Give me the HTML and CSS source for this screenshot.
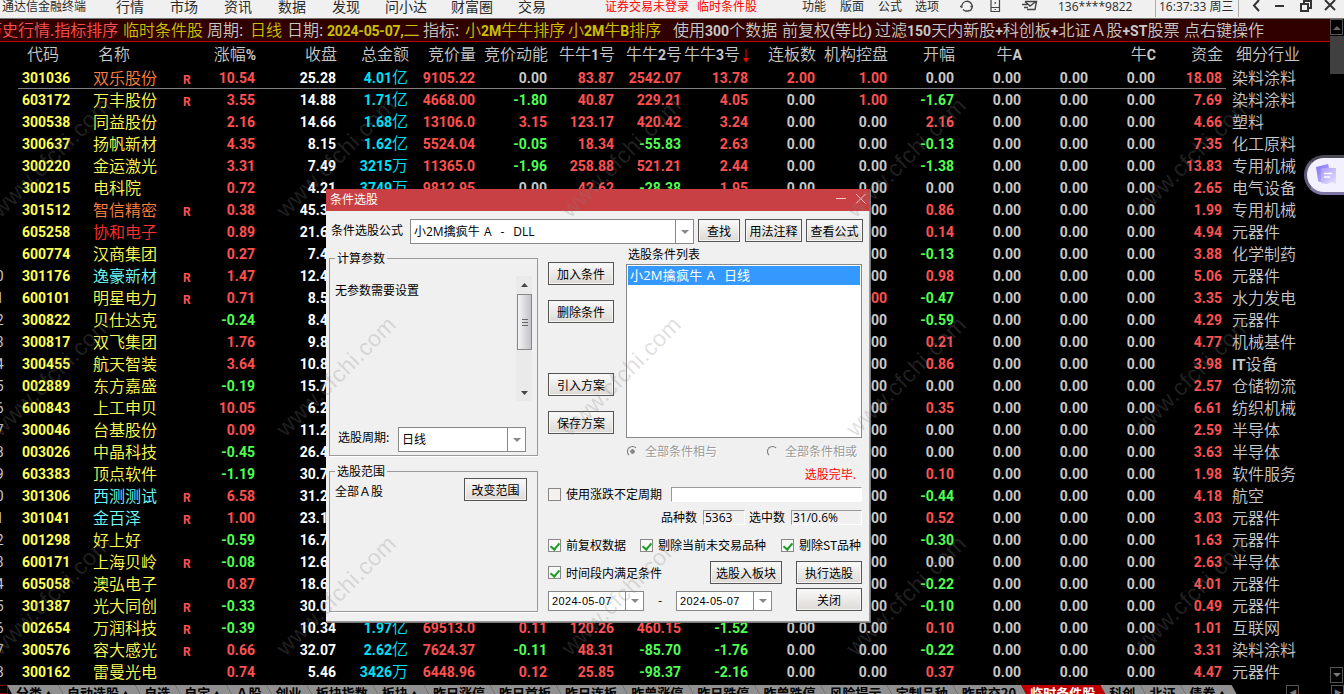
FILE: index.html
```html
<!DOCTYPE html>
<html lang="zh-CN">
<head>
  <meta charset="UTF-8">
  <meta name="viewport" content="width=device-width, initial-scale=1.0">
  <title>通达信金融终端</title>
  <link rel="stylesheet" href="styles.css">
</head>
<body>
  <header class="menubar">
    <span class="small">通达信金融终端</span>
    <span>行情</span><span>市场</span><span>资讯</span><span>数据</span>
    <span>发现</span><span>问小达</span><span>财富圈</span><span>交易</span>
    <span class="small alert">证券交易未登录</span>
    <span class="small alert">临时条件股</span>
    <span class="small">功能</span><span class="small">版面</span><span class="small">公式</span><span class="small">选项</span>
    <svg width="15" height="13" viewBox="0 0 15 13" fill="none" stroke="#444" stroke-width="1.3"><path d="M1 6.500h2.500M3 8A5.200 5.200 0 1 1 13 5v3M11.500 6.500H14M13 8c-.5 2-2 3-4.500 3H6M4 9.500l2 1.500"/></svg>
    <svg width="11" height="13" viewBox="0 0 11 13" fill="none" stroke="#444" stroke-width="1.200"><path d="M1 0v11.500h8.500V0M1 7.500h8.500M5.200 2v2M5.200 9v1"/></svg>
    <svg width="16" height="13" viewBox="0 0 16 13" fill="none" stroke="#444" stroke-width="1.400"><path d="M3 1.500h11.500l-1.500 8H5M3 1.500l5 4.500 6-4.500M0 4.500h5M2 7.500h4"/></svg>
    <span class="small user">136****9822</span>
    <span class="small clock">16:37:33 周三</span>
    <svg width="8" height="12" viewBox="0 0 8 12" fill="none" stroke="#333" stroke-width="2"><path d="M7 0L2 5.500 7 11"/></svg>
    <svg width="10" height="12" viewBox="0 0 10 12" stroke="#333" stroke-width="2"><path d="M0 6h9"/></svg>
    <svg width="12" height="12" viewBox="0 0 12 12" fill="none" stroke="#333" stroke-width="2"><path d="M1 4h7v7H1zM4 4V1h7v7H8"/></svg>
    <svg width="12" height="12" viewBox="0 0 12 12" fill="none" stroke="#333" stroke-width="2"><path d="M1 0l10 10M11 0L1 10"/></svg>
  </header>

  <div class="workspace">
    <main class="quotes">
      <div class="infobar">
        <span class="red">历史行情.指标排序</span>
        <span class="olive">临时条件股</span>
        <span>周期:</span>
        <span class="olive">日线</span>
        <span>日期:</span>
        <span class="olive date-text"><b>2024-05-07,</b>二</span>
        <span>指标:</span>
        <span class="olive">小<b>2M</b>牛牛排序</span>
        <span class="olive">小<b>2M</b>牛<b>B</b>排序</span>
        <span>使用<b>300</b>个数据</span>
        <span>前复权<b>(</b>等比<b>)</b></span>
        <span>过滤<b>150</b>天内新股<b>+</b>科创板<b>+</b>北证Ａ股<b>+ST</b>股票</span>
        <span>点右键操作</span>
      </div>
      <div class="row head">
        <span></span>
        <span>代码</span>
        <span>名称</span>
        <span></span>
        <span>涨幅<b>%</b></span>
        <span>收盘</span>
        <span>总金额</span>
        <span>竞价量</span>
        <span>竞价动能</span>
        <span>牛牛<b>1</b>号</span>
        <span>牛牛<b>2</b>号</span>
        <span class="sorted">牛牛<b>3</b>号<svg width="6" height="14" viewBox="0 0 6 14" fill="#f00"><path d="M2.500 0h1v9H6L3 13.500 0 9h2.500z"/></svg></span>
        <span>连板数</span>
        <span>机构控盘</span>
        <span>开幅</span>
        <span>牛<b>A</b></span>
        <span></span>
        <span>牛<b>C</b></span>
        <span>资金</span>
        <span>细分行业</span>
      </div>
      <div id="rows"></div>
    </main>
    <aside class="scroll">
      <span class="scroll-btn"><svg width="8" height="5" viewBox="0 0 8 5"><path d="M0 5l4-4 4 4z" fill="#666"/></svg></span>
      <span class="scroll-thumb"></span>
      <span class="scroll-btn down"><svg width="8" height="5" viewBox="0 0 8 5"><path d="M0 0l4 4 4-4z" fill="#777"/></svg></span>
    </aside>
  </div>

  <footer class="tabs">
    <span class="tab-edge"></span>
    <span class="tab">分类<i>▲</i></span><span class="tab">自动选股<i>▲</i></span><span class="tab">自选</span><span class="tab">自定<i>▲</i></span><span class="tab">Ａ股</span><span class="tab">创业</span><span class="tab">板块指数</span><span class="tab">板块<i>▲</i></span><span class="tab">昨日涨停</span><span class="tab">昨日首板</span><span class="tab">昨日连板</span><span class="tab">昨曾涨停</span><span class="tab">昨日跌停</span><span class="tab">昨曾跌停</span><span class="tab">风险提示</span><span class="tab">定制品种</span><span class="tab">昨成交20</span><span class="tab active">临时条件股</span><span class="tab">科创</span><span class="tab">北证</span><span class="tab">债券<i>▲</i></span>
    <span class="tab-nav first">◂</span>
    <span class="tab-nav">▸</span>
  </footer>

  <section class="dialog">
    <div class="titlebar">
      <span>条件选股</span>
      <svg width="30" height="10" viewBox="0 0 30 10" fill="none" stroke="#f3c9ca"><path d="M0 4.500h10M20 0l9.500 9.500M29.500 0L20 9.500"/></svg>
    </div>
    <div class="formula">
      <label>条件选股公式</label>
      <div class="combo"><span>小2M擒疯牛 A  -  DLL</span><i></i></div>
      <button class="find">查找</button>
      <button class="note">用法注释</button>
      <button class="view">查看公式</button>
    </div>
    <div class="panes">
      <div class="left">
        <fieldset class="params">
          <legend>计算参数</legend>
          <div class="param-box">
            <span>无参数需要设置</span>
            <div class="vbar">
              <svg width="7" height="4" viewBox="0 0 7 4"><path d="M0 4l3.500-4L7 4z" fill="#444"/></svg>
              <span class="vthumb"></span>
              <svg width="7" height="4" viewBox="0 0 7 4"><path d="M0 0l3.500 4L7 0z" fill="#444"/></svg>
            </div>
          </div>
          <div class="period">
            <label>选股周期:</label>
            <div class="combo"><span>日线</span><i></i></div>
          </div>
        </fieldset>
        <fieldset class="range">
          <legend>选股范围</legend>
          <div class="range-line"><span>全部Ａ股</span><button>改变范围</button></div>
        </fieldset>
      </div>
      <div class="right">
        <div class="upper">
          <div class="actions">
            <button>加入条件</button>
            <button>删除条件</button>
            <button class="import">引入方案</button>
            <button>保存方案</button>
          </div>
          <div class="conditions">
            <label>选股条件列表</label>
            <div class="list"><div class="selected">小2M擒疯牛 A  日线</div></div>
          </div>
        </div>
        <div class="radios">
          <span class="radio on"></span><label>全部条件相与</label>
          <span class="radio"></span><label>全部条件相或</label>
        </div>
        <div class="status">选股完毕.</div>
        <div class="line free">
          <span class="check off"></span><label>使用涨跌不定周期</label><span class="field white"></span>
        </div>
        <div class="line counts">
          <label>品种数</label><span class="field">5363</span>
          <label>选中数</label><span class="field wide">31/0.6%</span>
        </div>
        <div class="line options">
          <span class="check"></span><label>前复权数据</label>
          <span class="check"></span><label>剔除当前未交易品种</label>
          <span class="check"></span><label>剔除ST品种</label>
        </div>
        <div class="line run">
          <span class="check"></span><label>时间段内满足条件</label>
          <button class="block">选股入板块</button>
          <button>执行选股</button>
        </div>
        <div class="dates">
          <div class="combo date"><span>2024-05-07</span><i></i></div>
          <span class="dash">-</span>
          <div class="combo date"><span>2024-05-07</span><i></i></div>
          <button>关闭</button>
        </div>
      </div>
    </div>
  </section>

  <div class="float-tool">
    <svg width="24" height="24" viewBox="0 0 24 24">
      <defs>
        <linearGradient id="sheet" x1="0" y1="0" x2="1" y2="1"><stop offset="0" stop-color="#8273f2"/><stop offset="1" stop-color="#c4bbfb"/></linearGradient>
        <linearGradient id="sheet2" x1="0" y1="0" x2="1" y2="1"><stop offset="0" stop-color="#a99cf8"/><stop offset="1" stop-color="#e6e1fd"/></linearGradient>
      </defs>
      <path d="M0 4l12-3 4 15-12 3q-2 0-2-2z" fill="url(#sheet)"/>
      <path d="M5 7q0-2 2-2h13v16l-5-2-4 2-6-1z" fill="url(#sheet2)"/>
      <path d="M8 10.500h8M8 14h6" stroke="#fff" stroke-width="1.500"/>
    </svg>
  </div>

  <div class="watermarks" id="marks"></div>

  <script src="script.js"></script>
</body>
</html>
```

FILE: styles.css
```css
* {
  box-sizing: border-box;
}
body {
  margin: 0;
  width: 1344px;
  height: 694px;
  overflow: hidden;
  position: relative;
  background: #000;
  color: #c8c8c8;
  font-family: "Noto Sans CJK SC", sans-serif;
  font-size: 16px;
}
b {
  font-family: Roboto, sans-serif;
  font-size: 14px;
  font-weight: 700;
}

/* top menu */
.menubar {
  display: grid;
  grid-template-columns: 114px 54px 54px 54px 54px 53px 66px 67px 87px 92px 105px 38px 38px 37px 44px 31px 32px 36px 97px 97px 23px 25px 24px 16px;
  height: 19px;
  padding-left: 2px;
  background: #f0f0f0;
  border-bottom: 1px solid #777;
  color: #2b2b2b;
  font-size: 14px;
  line-height: 12px;
  overflow: hidden;
  white-space: nowrap;
}
.menubar .small {
  font-size: 12px;
}
.menubar .alert {
  color: #f00;
}
.menubar .user {
  font-family: "Open Sans", sans-serif;
  line-height: 13px;
}
.menubar .clock {
  font-family: "Open Sans", "Noto Sans CJK SC", sans-serif;
  line-height: 13px;
  width: 84px;
  height: 17px;
  padding-left: 3px;
  border-left: 1px solid #aaa;
  border-right: 1px solid #aaa;
}

/* quotes */
.workspace {
  display: flex;
  height: 666px;
}
.quotes {
  width: 1330px;
  overflow: hidden;
}
.infobar {
  display: grid;
  grid-template-columns: 137px 84px 43px 37px 40px 96px 42px 103px 105px 109px 93px 309px 90px;
  height: 23px;
  width: 1330px;
  margin-bottom: 1px;
  background: #300000;
  border-bottom: 1px solid #c00000;
  line-height: 21px;
  font-weight: 350;
  white-space: nowrap;
}
.infobar span {
  position: relative;
  left: -14px;
}
.infobar b {
  line-height: 20px;
}
.infobar .date-text {
  letter-spacing: -0.2px;
}
.olive {
  color: #c8c000;
}
.row {
  display: grid;
  grid-template-columns: 22px 71px 90px 17px 55px 81px 72px 67px 72px 67px 67px 67px 67px 72px 67px 67px 67px 67px 67px 1fr;
  height: 22px;
  line-height: 22px;
  font-family: Roboto, "Noto Sans CJK SC", sans-serif;
  font-size: 14px;
  font-weight: 700;
  text-align: right;
  white-space: nowrap;
}
.row.current {
  background: linear-gradient(#808080, #808080) 18px 21px / 1208px 1px no-repeat;
}
.row .num {
  overflow: hidden;
  text-align: left;
  text-indent: -12px;
  font-weight: 400;
}
.row .code {
  text-align: left;
  color: #ff5;
}
.row .name,
.row .industry,
.row .unit {
  font-family: "Noto Sans CJK SC", sans-serif;
  font-size: 16px;
  font-weight: 350;
  line-height: 21px;
}
.row .unit {
  line-height: 0;
}
.row .name {
  text-align: left;
  color: #ff5;
}
.row .industry {
  text-align: left;
  padding-left: 10px;
}
.row .industry b {
  font-size: 15px;
}
.row .mark {
  text-align: left;
  font-size: 12px;
  line-height: 27px;
  color: #ff5050;
}
.row .white {
  color: #fff;
}
.row .amount {
  color: #00e0f8;
}
.red,
.row .up {
  color: #ff5050;
}
.row .down {
  color: #50ff50;
}
.row .orange {
  color: #ff8040;
}
.row .hot {
  color: #ff3030;
}
.row .cyan {
  color: #70ffff;
}
.head {
  height: 24px;
  line-height: 21px;
  font-family: "Noto Sans CJK SC", sans-serif;
  font-size: 16px;
  font-weight: 350;
}
.head span {
  margin-right: -1px;
}
.head b {
  line-height: 0;
}
.head span:nth-child(2),
.head span:nth-child(3) {
  text-align: left;
  padding-left: 5px;
}
.head span:last-child {
  text-align: left;
  padding-left: 14px;
}
.sorted svg {
  margin-left: 3px;
  vertical-align: -3px;
}

/* main scrollbar */
.scroll {
  width: 14px;
  display: flex;
  flex-direction: column;
}
.scroll-btn {
  width: 13px;
  height: 16px;
  border: 1px solid #555;
  display: flex;
  align-items: center;
  justify-content: center;
}
.scroll-thumb {
  height: 38px;
  margin-top: 1px;
  background: #404040;
}
.scroll-btn.down {
  margin-top: auto;
  margin-bottom: 2px;
}

/* bottom tabs */
.tabs {
  display: flex;
  height: 9px;
  overflow: hidden;
  font-size: 13px;
  line-height: 15px;
  font-weight: 700;
  color: #000;
  white-space: nowrap;
}
.tab-edge {
  width: 8px;
  border: 1px solid #800000;
  border-left: 0;
  margin-right: -1px;
}
.tab {
  padding: 0 10.1px 0 9px;
  height: 19px;
  background: #909090;
  clip-path: polygon(0 0, calc(100% - 5px) 0, 100% 9px, 5px 9px);
  margin-right: -5px;
}
.tab i {
  font-style: normal;
  font-size: 9px;
  display: inline-block;
  width: 11px;
  text-align: right;
}
.tab.active {
  background: #c00000;
  color: #fff;
}
.tab-nav {
  width: 13px;
  height: 14px;
  border: 1px solid #555;
  color: #777;
  font-size: 12px;
  line-height: 9px;
  text-align: center;
  margin-left: 32px;
}
.tab-nav.first {
  margin-left: auto;
}

/* stock picker dialog */
.dialog {
  position: absolute;
  left: 326px;
  top: 189px;
  width: 544px;
  height: 433px;
  background: #f0f0f0;
  color: #000;
  font-size: 12px;
  line-height: 16px;
  white-space: nowrap;
  box-shadow: inset -1px -1px #999, 1px 1px #777;
}
.titlebar {
  display: flex;
  justify-content: space-between;
  height: 22px;
  padding: 2px 4px 0;
  background: #c84044;
  color: #fff;
}
.titlebar svg {
  margin-top: 3px;
}
.formula {
  display: flex;
  height: 36px;
  padding: 8px 0 0 5px;
}
.formula label {
  width: 79px;
  padding-top: 3px;
}
.combo {
  display: flex;
  background: #fff;
  border: 1px solid #888;
  font-family: "Open Sans", "Noto Sans CJK SC", sans-serif;
}
.combo span {
  flex: 1;
  padding-left: 3px;
  white-space: pre;
  word-spacing: 1.3px;
}
.combo i {
  width: 18px;
  border-left: 1px solid #888;
  display: flex;
  align-items: center;
  justify-content: center;
}
.combo i::before {
  content: "";
  border: 4px solid transparent;
  border-top-color: #888;
  border-bottom: 0;
}
.formula .combo {
  width: 284px;
  height: 25px;
  line-height: 23px;
}
.dialog button {
  height: 23px;
  width: 66px;
  padding: 0;
  border: 1px solid #555;
  background: linear-gradient(#fafafa, #dddad5);
  box-shadow: inset 0 0 0 1px #f4f4f4;
  color: #000;
  font-family: inherit;
  font-size: 12px;
  line-height: 20px;
}
.formula .find {
  width: 42px;
  margin-left: 4px;
}
.formula .note {
  width: 57px;
  margin-left: 5px;
}
.formula .view {
  width: 57px;
  margin-left: 4px;
}
.panes {
  display: flex;
  gap: 10px;
  padding-left: 3px;
}
.left {
  width: 209px;
  padding-top: 3px;
}
fieldset {
  margin: 0;
  padding: 0;
  min-width: 0;
  border: 1px solid #999;
  box-shadow: 0 1px #fff;
}
legend {
  margin-left: 5px;
  padding: 0 2px;
  line-height: 16px;
}
.params {
  height: 206px;
}
.param-box {
  display: flex;
  justify-content: space-between;
  height: 125px;
  margin-top: 10px;
  padding: 0 5px 0 5px;
}
.param-box > span {
  padding-top: 6px;
}
.vbar {
  width: 16px;
  background: #eaeaea;
  display: flex;
  flex-direction: column;
  align-items: center;
  padding: 7px 0 6px;
}
.vthumb {
  width: 15px;
  height: 56px;
  margin: 7px 0 auto;
  border: 1px solid #888;
  background: linear-gradient(#666, #666) 4px 24px / 6px 1px no-repeat,
    linear-gradient(#666, #666) 4px 27px / 6px 1px no-repeat,
    linear-gradient(#666, #666) 4px 30px / 6px 1px no-repeat,
    linear-gradient(90deg, #f4f4f4, #c2c2c8);
}
.period {
  display: flex;
  padding: 26px 0 0 8px;
}
.period label {
  width: 60px;
  padding-top: 2px;
}
.period .combo {
  width: 128px;
  height: 25px;
  line-height: 23px;
}
.range {
  height: 149px;
  margin-top: 7px;
}
.range-line {
  display: flex;
  justify-content: space-between;
  padding: 0 10px 0 5px;
  margin-top: -1px;
}
.range-line span {
  padding-top: 5px;
}
.range-line button {
  width: 63px;
}
.right {
  width: 314px;
}
.upper {
  display: flex;
  gap: 12px;
  height: 191px;
}
.actions {
  display: flex;
  flex-direction: column;
  gap: 15px;
  padding-top: 15px;
}
.actions .import {
  margin-top: 35px;
}
.conditions label {
  display: block;
  height: 17px;
  padding-left: 2px;
  line-height: 14px;
}
.list {
  width: 236px;
  height: 174px;
  padding: 1px;
  background: #fff;
  border: 1px solid #888;
}
.selected {
  height: 19px;
  padding-left: 2px;
  background: #3399ff;
  color: #fff;
  font-family: "Open Sans", "Noto Sans CJK SC", sans-serif;
  font-size: 13px;
  line-height: 19px;
  letter-spacing: 0.2px;
  word-spacing: 0.8px;
  white-space: pre;
}
.radios {
  display: flex;
  align-items: center;
  height: 26px;
  padding-left: 79px;
  color: #999;
}
.radios label {
  padding-left: 7px;
  text-shadow: 1px 1px #fff;
}
.radio {
  flex: none;
  width: 11px;
  height: 11px;
  border: 1px solid #777;
  border-right-color: #eee;
  border-bottom-color: #eee;
  border-radius: 50%;
}
.radio.on {
  background: radial-gradient(#888 0 2px, transparent 2.500px);
}
.radios label + .radio {
  margin-left: 50px;
}
.status {
  height: 22px;
  padding-right: 6px;
  line-height: 20px;
  text-align: right;
  color: #f00;
}
.line {
  display: flex;
  align-items: center;
}
.check {
  flex: none;
  width: 13px;
  height: 13px;
  margin-right: 5px;
  border: 1px solid #888;
  background: #f8f8f8;
}
.check::after {
  content: "";
  display: block;
  width: 4px;
  height: 7px;
  margin: 1px 0 0 3px;
  border: solid #1f9b27;
  border-width: 0 2px 2px 0;
  transform: rotate(40deg);
}
.check.off {
  background: #f4f1ee;
}
.check.off::after {
  display: none;
}
.field {
  width: 42px;
  height: 15px;
  padding-left: 1px;
  border: 1px solid #999;
  border-right-color: #fff;
  border-bottom-color: #fff;
  font-family: "Open Sans", sans-serif;
  line-height: 13px;
}
.field.wide {
  width: 71px;
}
.field.white {
  width: 191px;
  margin-left: auto;
  background: #fff;
}
.free {
  height: 16px;
}
.counts {
  height: 30px;
  justify-content: flex-end;
}
.counts .field {
  margin-left: 6px;
}
.counts .field + label {
  margin-left: 4px;
}
.options {
  height: 26px;
}
.options label + .check {
  margin-left: 14px;
}
.options label + .check:last-of-type {
  margin-left: 15px;
}
.run {
  height: 29px;
}
.run label {
  flex: 1;
}
.dialog .run .block {
  width: 72px;
  margin-right: 14px;
}
.dates {
  display: flex;
}
.date {
  width: 96px;
  height: 20px;
  margin-top: 4px;
  line-height: 18px;
  font-size: 11px;
  font-family: "Liberation Sans", sans-serif;
  letter-spacing: 0.35px;
}
.dash {
  width: 32px;
  padding-top: 5px;
  text-align: center;
}
.dates button {
  margin: 1px 0 0 24px;
}

/* floating assistant button */
.float-tool {
  position: absolute;
  left: 1304px;
  top: 155px;
  width: 44px;
  height: 40px;
  padding: 5px 0 0 9px;
  border: 3px solid #5f5b78;
  border-top-color: #4a4a55;
  border-bottom-color: #7d75a8;
  border-radius: 20px 0 0 20px;
  background: #f3f0ff;
}

.watermarks {
  position: absolute;
  left: -91px;
  top: 48px;
  width: 1435px;
  height: 657px;
  display: grid;
  grid-template-columns: repeat(5, 285px);
  grid-auto-rows: 219px;
  place-items: center;
  overflow: hidden;
  pointer-events: none;
}
.watermarks span {
  transform: rotate(-45deg);
  font-family: "Liberation Sans", sans-serif;
  font-size: 23px;
  letter-spacing: 0.5px;
  color: rgba(128, 128, 128, 0.25);
}
```

FILE: script.js
```js
// code, name, name colour, margin mark, change, close, amount, auction volume, momentum,
// niu1, niu2, niu3, limit days, institution, open, fund, industry
const stocks = [
  '301036|双乐股份|orange|R|10.54|25.28|4.01亿|9105.22|0.00|83.87|2542.07|13.78|2.00|1.00|0.00|18.08|染料涂料',
  '603172|万丰股份||R|3.55|14.88|1.71亿|4668.00|-1.80|40.87|229.21|4.05|0.00|1.00|-1.67|7.69|染料涂料',
  '300538|同益股份|||2.16|14.66|1.68亿|13106.0|3.15|123.17|420.42|3.24|0.00|0.00|2.16|4.66|塑料',
  '300637|扬帆新材|||4.35|8.15|1.62亿|5524.04|-0.05|18.34|-55.83|2.63|0.00|0.00|-0.13|7.35|化工原料',
  '300220|金运激光|||3.31|7.49|3215万|11365.0|-1.96|258.88|521.21|2.44|0.00|0.00|-1.38|13.83|专用机械',
  '300215|电科院|||0.72|4.21|3749万|9812.95|0.00|42.62|-28.38|1.95|0.00|0.00|0.00|2.65|电气设备',
  '301512|智信精密|orange|R|0.38|45.38||||||||0.00|0.86|1.99|专用机械',
  '605258|协和电子|hot||0.89|21.60||||||||0.00|0.14|4.94|元器件',
  '600774|汉商集团|||0.27|7.40||||||||0.00|-0.13|3.88|化学制药',
  '301176|逸豪新材|cyan|R|1.47|12.40||||||||0.00|0.98|5.06|元器件',
  '600101|明星电力||R|0.71|8.50||||||||1.00|-0.47|3.35|水力发电',
  '300822|贝仕达克|||-0.24|8.40||||||||0.00|-0.59|4.29|元器件',
  '300817|双飞集团|||1.76|9.80||||||||0.00|0.21|4.77|机械基件',
  '300455|航天智装|||3.64|10.80||||||||0.00|0.86|3.98|IT设备',
  '002889|东方嘉盛|||-0.19|15.70||||||||0.00|0.00|2.57|仓储物流',
  '600843|上工申贝|||10.05|6.20||||||||0.00|0.35|6.61|纺织机械',
  '300046|台基股份|||0.09|11.20||||||||0.00|0.00|2.59|半导体',
  '003026|中晶科技|||-0.45|26.40||||||||0.00|0.00|3.63|半导体',
  '603383|顶点软件|||-1.19|30.70||||||||0.00|0.10|1.98|软件服务',
  '301306|西测测试|cyan|R|6.58|31.20||||||||0.00|-0.44|4.18|航空',
  '301041|金百泽|cyan|R|1.00|23.10||||||||0.00|0.52|3.03|元器件',
  '001298|好上好|||-0.59|16.70||||||||0.00|-0.30|1.63|元器件',
  '600171|上海贝岭||R|-0.08|12.60||||||||0.00|0.00|2.63|半导体',
  '605058|澳弘电子|||0.87|18.60||||||||0.00|-0.22|4.01|元器件',
  '301387|光大同创||R|-0.33|30.00||||||||0.00|-0.10|0.49|元器件',
  '002654|万润科技||R|-0.39|10.34|1.97亿|69513.0|0.11|120.26|460.15|-1.52|0.00|0.00|0.10|1.01|互联网',
  '300576|容大感光||R|0.66|32.07|2.62亿|7624.37|-0.11|48.31|-85.70|-1.76|0.00|0.00|-0.22|3.31|染料涂料',
  '300162|雷曼光电|||0.74|5.46|3426万|6448.96|0.12|25.85|-98.37|-2.16|0.00|0.00|0.37|4.47|元器件'
];

function cell(text, cls) {
  return `<span class="${cls}">${text}</span>`;
}

function value(text) {
  const n = parseFloat(text);
  return cell(text, n > 0 ? 'up' : n < 0 ? 'down' : '');
}

function buildRow(line, i) {
  const s = line.split('|');
  const amount = s[6].replace(/[亿万]/, '<span class="unit">$&</span>');
  return `<div class="row${i === 0 ? ' current' : ''}">` +
    cell(i + 1, 'num') +
    cell(s[0], 'code') +
    cell(s[1], 'name ' + s[2]) +
    cell(s[3], 'mark') +
    value(s[4]) +
    cell(s[5], 'white') +
    cell(amount, 'amount') +
    s.slice(7, 15).map(value).join('') +
    value('0.00') + value('0.00') + value('0.00') +
    value(s[15]) +
    cell(s[16].replace('IT', '<b>IT</b>'), 'industry') +
    '</div>';
}

document.getElementById('rows').innerHTML = stocks.map(buildRow).join('');
document.getElementById('marks').innerHTML = '<span>www.cfchi.com</span>'.repeat(15);
```
